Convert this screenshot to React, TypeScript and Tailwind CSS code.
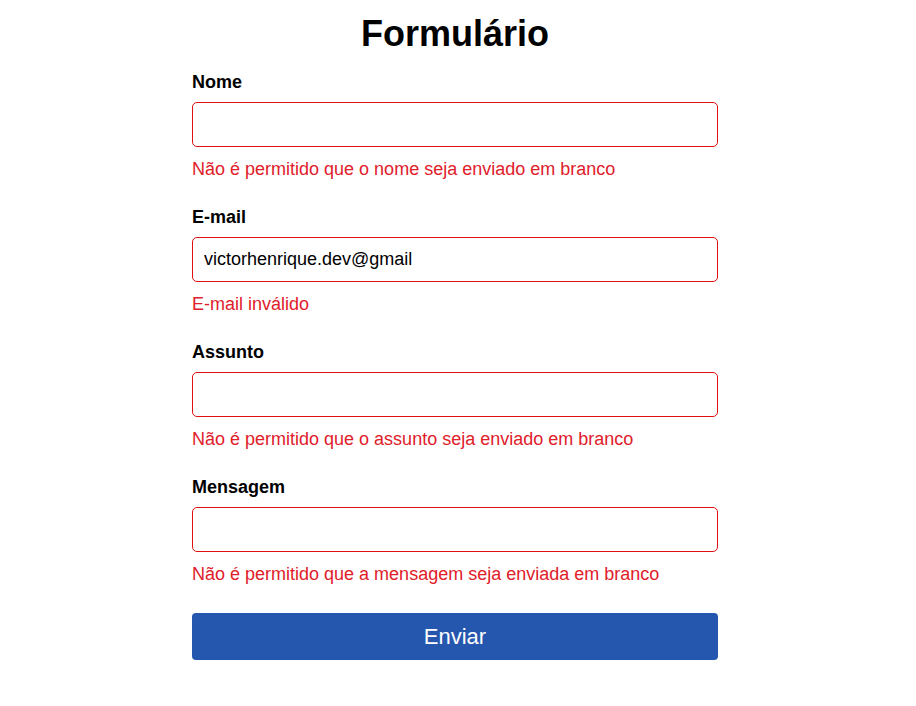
import React, { useState } from 'react';

type Field = {
    name: string;
    label: string;
    value: string;
    error: string;
};

const FIELDS: Field[] = [
    { name: 'nome', label: 'Nome', value: '', error: 'Não é permitido que o nome seja enviado em branco' },
    { name: 'email', label: 'E-mail', value: 'victorhenrique.dev@gmail', error: 'E-mail inválido' },
    { name: 'assunto', label: 'Assunto', value: '', error: 'Não é permitido que o assunto seja enviado em branco' },
    { name: 'mensagem', label: 'Mensagem', value: '', error: 'Não é permitido que a mensagem seja enviada em branco' },
];

const App = () => {
    const [values, setValues] = useState<Record<string, string>>(
        Object.fromEntries(FIELDS.map(f => [f.name, f.value]))
    );

    return (
        <div className="min-h-screen bg-white pr-[6px] font-['Liberation_Sans',Arial,sans-serif] text-black">
            <div className="mx-auto w-[526px]">
                <h1 className="mt-[13px] mb-[17px] text-center text-[36px] font-bold leading-[41px]">Formulário</h1>

                <form className="flex flex-col gap-[26px]" onSubmit={e => e.preventDefault()}>
                    {FIELDS.map(field => (
                        <div key={field.name} className="flex flex-col">
                            <label htmlFor={field.name} className="mb-[9px] pt-[1px] text-[18px] font-bold leading-[21px]">
                                {field.label}
                            </label>
                            <input
                                id={field.name}
                                type="text"
                                value={values[field.name]}
                                onChange={e => setValues({ ...values, [field.name]: e.target.value })}
                                className="h-[45px] rounded-[5px] border border-[#e01010] px-[11px] text-[18px] outline-none"
                            />
                            <p className="mt-[12px] text-[18px] leading-[21px] text-[#e0202a]">{field.error}</p>
                        </div>
                    ))}

                    <button
                        type="submit"
                        className="mt-[2px] h-[47px] rounded-[4px] bg-[#2657ae] text-[22px] leading-[25px] text-white"
                    >
                        Enviar
                    </button>
                </form>
            </div>
        </div>
    );
};

export default App;
